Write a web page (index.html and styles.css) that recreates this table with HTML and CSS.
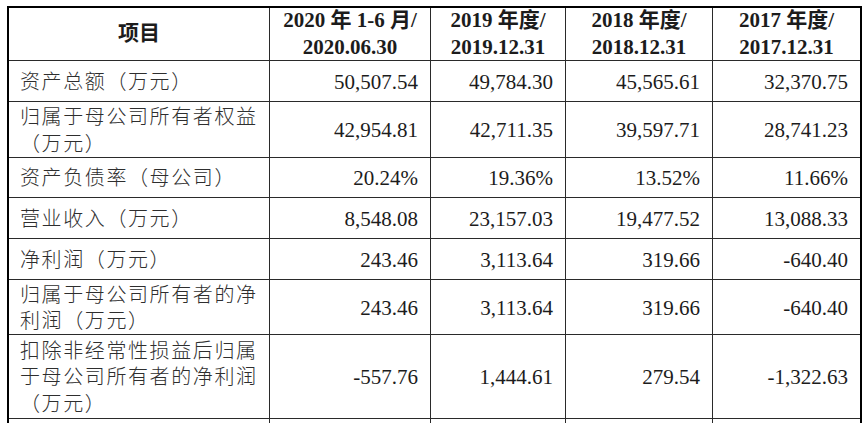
FILE: index.html
```html
<!DOCTYPE html>
<html lang="zh-CN">
<head>
<meta charset="utf-8">
<title>主要财务数据</title>
<link rel="stylesheet" href="styles.css">
</head>
<body>
<div class="sheet">
  <div class="grid">
    <div class="cell head">项目</div>
    <div class="cell head">2020 年 1-6 月/<br>2020.06.30</div>
    <div class="cell head">2019 年度/<br>2019.12.31</div>
    <div class="cell head">2018 年度/<br>2018.12.31</div>
    <div class="cell head last">2017 年度/<br>2017.12.31</div>

    <div class="cell label">资产总额（万元）</div>
    <div class="cell num">50,507.54</div>
    <div class="cell num">49,784.30</div>
    <div class="cell num">45,565.61</div>
    <div class="cell num last">32,370.75</div>

    <div class="cell label">归属于母公司所有者权益<br>（万元）</div>
    <div class="cell num">42,954.81</div>
    <div class="cell num">42,711.35</div>
    <div class="cell num">39,597.71</div>
    <div class="cell num last">28,741.23</div>

    <div class="cell label">资产负债率（母公司）</div>
    <div class="cell num">20.24%</div>
    <div class="cell num">19.36%</div>
    <div class="cell num">13.52%</div>
    <div class="cell num last">11.66%</div>

    <div class="cell label">营业收入（万元）</div>
    <div class="cell num">8,548.08</div>
    <div class="cell num">23,157.03</div>
    <div class="cell num">19,477.52</div>
    <div class="cell num last">13,088.33</div>

    <div class="cell label">净利润（万元）</div>
    <div class="cell num">243.46</div>
    <div class="cell num">3,113.64</div>
    <div class="cell num">319.66</div>
    <div class="cell num last">-640.40</div>

    <div class="cell label">归属于母公司所有者的净<br>利润（万元）</div>
    <div class="cell num">243.46</div>
    <div class="cell num">3,113.64</div>
    <div class="cell num">319.66</div>
    <div class="cell num last">-640.40</div>

    <div class="cell label">扣除非经常性损益后归属<br>于母公司所有者的净利润<br>（万元）</div>
    <div class="cell num">-557.76</div>
    <div class="cell num">1,444.61</div>
    <div class="cell num">279.54</div>
    <div class="cell num last">-1,322.63</div>

    <div class="cell label tail"></div>
    <div class="cell num tail"></div>
    <div class="cell num tail"></div>
    <div class="cell num tail"></div>
    <div class="cell num last tail"></div>
  </div>
</div>
</body>
</html>
```

FILE: styles.css
```css
html, body {
  margin: 0;
  padding: 0;
  background: #ffffff;
}

body {
  font-family: "Liberation Serif", "Noto Sans CJK SC", serif;
  color: #1c1c1c;
  overflow: hidden;
}

.sheet {
  margin: 6px 0 0 7px;
  width: 851px;
  border: 2px solid #000000;
  border-bottom: none;
}

.grid {
  display: grid;
  grid-template-columns: 261px 161px 135px 147px 147px;
  grid-template-rows: 53px 41px 56px 40px 41px 41px 55px 84px 6px;
}

.cell {
  box-sizing: border-box;
  border-right: 1px solid #2a2a2a;
  border-bottom: 1px solid #2a2a2a;
  display: flex;
  align-items: center;
  white-space: nowrap;
}

.cell.last {
  border-right: none;
}

.cell.tail {
  border-bottom: none;
}

.head {
  justify-content: center;
  text-align: center;
  font-weight: bold;
  font-size: 21px;
  line-height: 27px;
  padding-bottom: 1px;
}

.label {
  justify-content: flex-start;
  padding-left: 11px;
  font-family: "Noto Sans CJK SC", sans-serif;
  font-weight: 300;
  font-size: 20px;
  letter-spacing: 1.6px;
  line-height: 26.5px;
  color: #2e2e2e;
}

.num {
  justify-content: flex-end;
  padding-right: 12px;
  font-size: 21px;
  padding-top: 2px;
}
```
